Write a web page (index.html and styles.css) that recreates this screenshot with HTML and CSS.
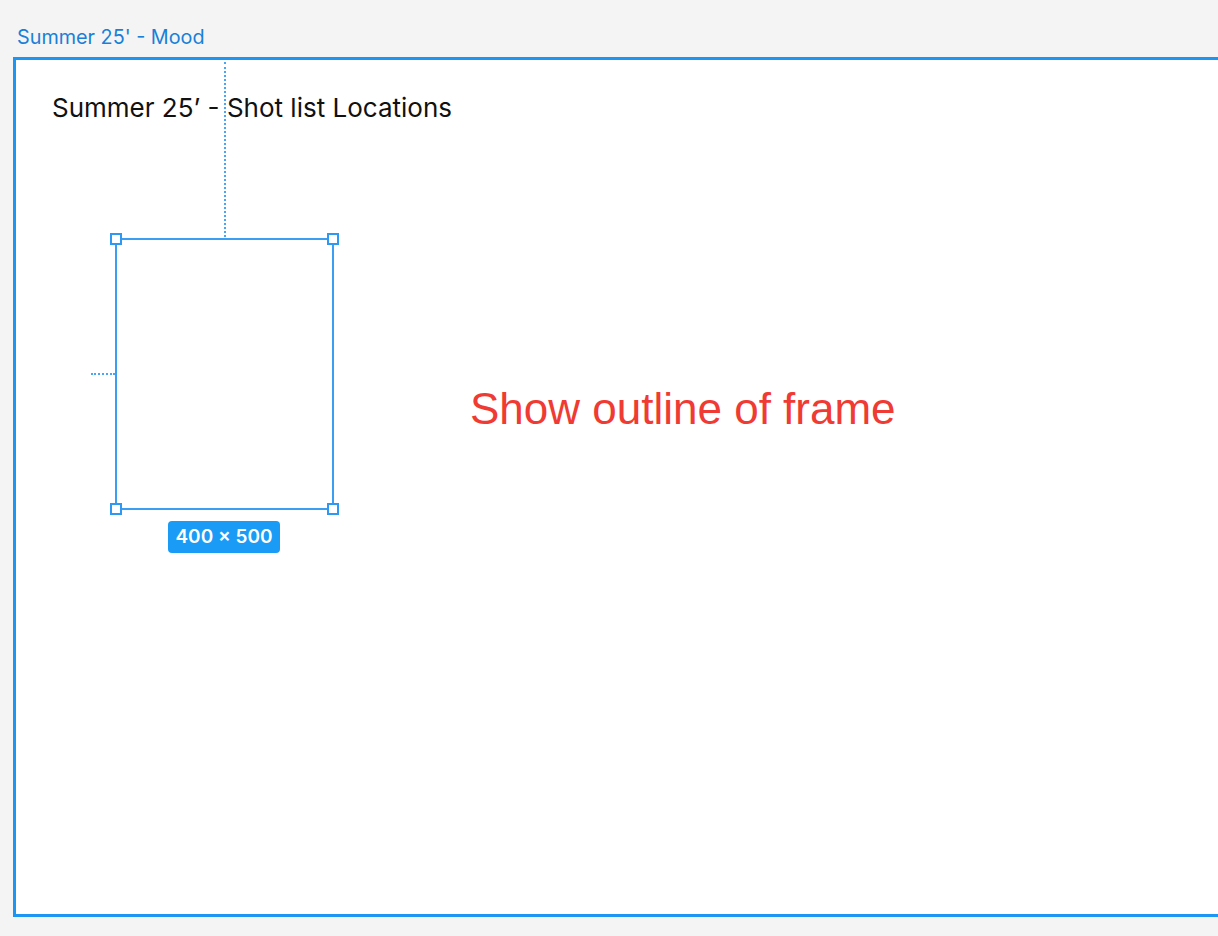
FILE: index.html
```html
<!DOCTYPE html>
<html>

<head>
    <title>Summer 25' - Mood</title>
    <link rel="stylesheet" href="styles.css">
</head>

<body>
    <div class="frameLabel">Summer 25' - Mood</div>

    <div class="frame">
        <div class="title">Summer 25’ - Shot list Locations</div>

        <div class="guide vertical"></div>
        <div class="guide horizontal"></div>

        <div class="selection">
            <div class="handle tl"></div>
            <div class="handle tr"></div>
            <div class="handle bl"></div>
            <div class="handle br"></div>
            <div class="size">400 × 500</div>
        </div>

        <div class="note">Show outline of frame</div>
    </div>
</body>

</html>
```

FILE: styles.css
```css
html,
body {
    margin: 0;
    height: 100%;
    overflow: hidden;
}

body {
    background-color: #f4f4f4;
    font-family: "Inter", "Liberation Sans", sans-serif;
}

.frameLabel {
    color: #1a7fd8;
    font-size: 19.8px;
    padding: 26px 0 0 17px;
    height: 33px;
    box-sizing: border-box;
    line-height: 22px;
}

.frame {
    position: relative;
    margin-left: 13px;
    margin-top: 24px;
    width: 1240px;
    height: 854px;
    background-color: #fff;
    border: 3px solid #1c95f3;
}

.title {
    padding: 33px 0 0 36px;
    font-size: 26px;
    line-height: 30px;
    color: #111;
}

.guide {
    position: absolute;
}

.guide.vertical {
    left: 208px;
    top: 2px;
    height: 175px;
    border-left: 2px dotted #4aa6f3;
}

.guide.horizontal {
    left: 75px;
    top: 313px;
    width: 24px;
    border-top: 2px dotted #4aa6f3;
}

.selection {
    position: absolute;
    left: 99px;
    top: 178px;
    width: 215px;
    height: 268px;
    border: 2px solid #3c9ef2;
}

.handle {
    position: absolute;
    width: 12px;
    height: 12px;
    background-color: #fff;
    border: 2px solid #2e98f2;
    box-sizing: border-box;
}

.handle.tl {
    left: -7px;
    top: -7px;
}

.handle.tr {
    right: -7px;
    top: -7px;
}

.handle.bl {
    left: -7px;
    bottom: -7px;
}

.handle.br {
    right: -7px;
    bottom: -7px;
}

.size {
    position: absolute;
    left: 51px;
    top: 281px;
    width: 112px;
    height: 32px;
    line-height: 32px;
    border-radius: 4px;
    background-color: #199bf6;
    color: #fff;
    font-size: 19px;
    font-weight: 600;
    text-align: center;
}

.note {
    position: absolute;
    left: 454px;
    top: 324px;
    font-family: "Liberation Sans", Arial, sans-serif;
    font-size: 44px;
    line-height: 50px;
    color: #ef3b33;
}
```
